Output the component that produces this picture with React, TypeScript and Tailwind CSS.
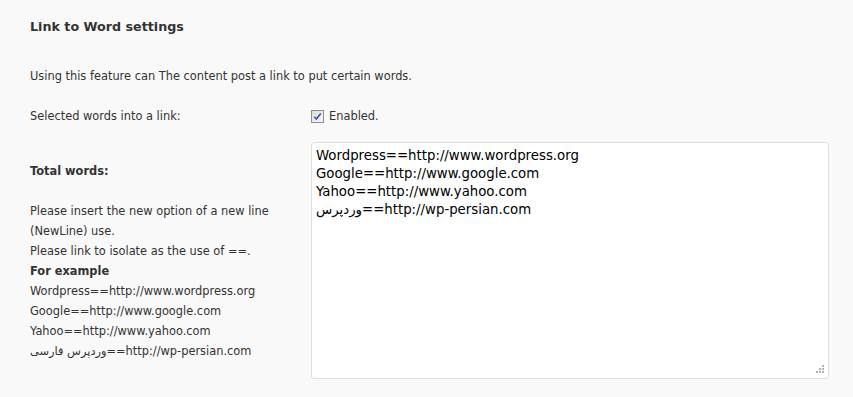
const examples = [
  'Wordpress==http://www.wordpress.org',
  'Google==http://www.google.com',
  'Yahoo==http://www.yahoo.com',
  'وردپرس فارسی==http://wp-persian.com',
];

const defaultValue = [
  'Wordpress==http://www.wordpress.org',
  'Google==http://www.google.com',
  'Yahoo==http://www.yahoo.com',
  'وردپرس==http://wp-persian.com',
].join('\n');

function Checkbox() {
  return (
    <span className="inline-flex h-[13px] w-[13px] items-center justify-center border border-[#8e8f8f] bg-gradient-to-br from-[#dcdcdc] to-[#f7f7f7]">
      <svg viewBox="0 0 10 10" className="h-[9px] w-[9px]">
        <path d="M1.5 5.2 L3.8 7.8 L8.6 1.6" fill="none" stroke="#3a55a5" strokeWidth="1.8" />
      </svg>
    </span>
  );
}

export default function App() {
  return (
    <div className="min-h-[397px] w-[853px] bg-[#f9f9f9] pl-[30px] pt-[18px] text-[11.4px] leading-[20px] text-[#333] font-['DejaVu_Sans',Verdana,sans-serif]">
      <h3 className="text-[12.7px] font-bold leading-[17px]">Link to Word settings</h3>

      <p className="mt-[32px] leading-[18px]">
        Using this feature can The content post a link to put certain words.
      </p>

      <div className="mt-[21px] flex items-center">
        <div className="w-[281px] shrink-0 leading-[18px]">Selected words into a link:</div>
        <label className="flex items-center gap-[5px]">
          <Checkbox />
          <span>Enabled.</span>
        </label>
      </div>

      <div className="mt-[16px] flex">
        <div className="w-[281px] shrink-0 pt-[20px]">
          <div className="font-bold leading-[18px]">Total words:</div>
          <div className="mt-[21px]">
            <div>Please insert the new option of a new line</div>
            <div>(NewLine) use.</div>
            <div>Please link to isolate as the use of ==.</div>
            <div className="font-bold">For example</div>
            {examples.map((line) => (
              <div key={line}>{line}</div>
            ))}
          </div>
        </div>
        <div className="relative shrink-0">
          <textarea
            defaultValue={defaultValue}
            className="block h-[237px] w-[518px] resize-none rounded-[3px] border border-[#dfdfdf] bg-white px-[4px] pt-[4px] pb-[4px] text-[13.3px] leading-[18px] text-[#000] outline-none font-['DejaVu_Sans',Verdana,sans-serif]"
          />
          <svg viewBox="0 0 10 10" className="pointer-events-none absolute bottom-[4px] right-[4px] h-[10px] w-[10px]" fill="#b5b5b5">
            <rect x="7" y="0" width="2" height="2" />
            <rect x="4" y="3" width="2" height="2" />
            <rect x="7" y="3" width="2" height="2" />
            <rect x="1" y="6" width="2" height="2" />
            <rect x="4" y="6" width="2" height="2" />
            <rect x="7" y="6" width="2" height="2" />
          </svg>
        </div>
      </div>
    </div>
  );
}
